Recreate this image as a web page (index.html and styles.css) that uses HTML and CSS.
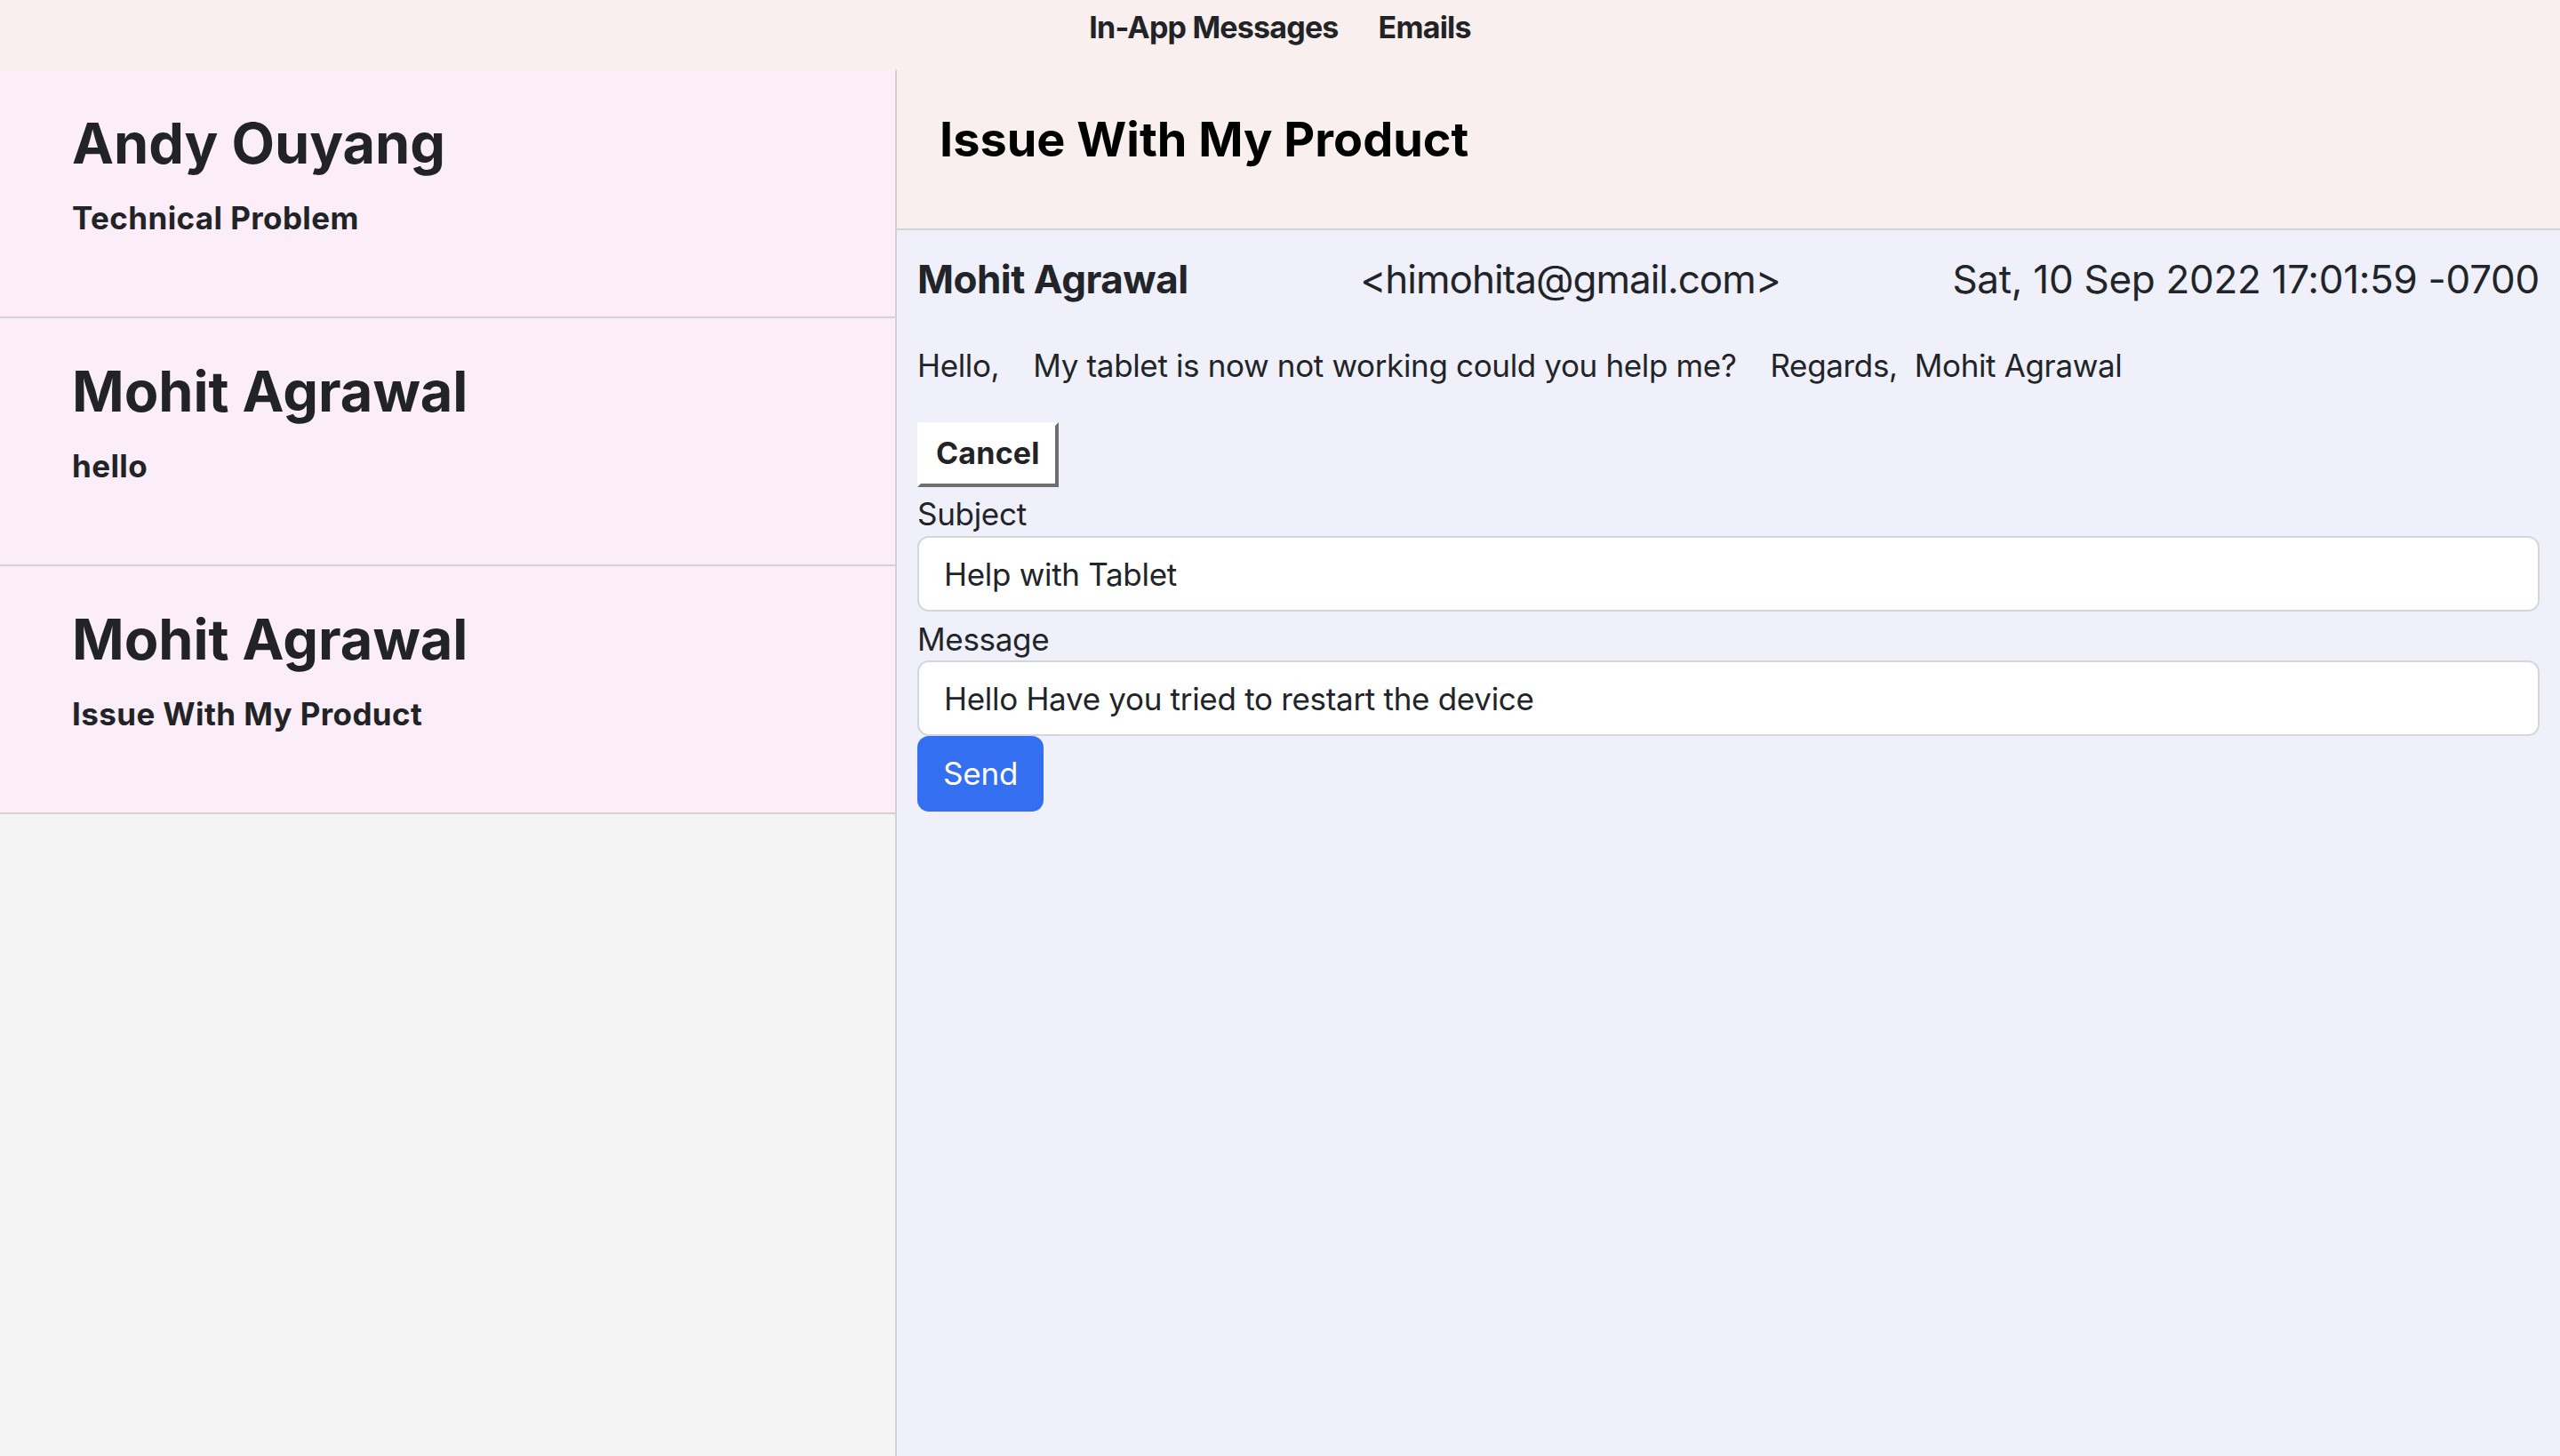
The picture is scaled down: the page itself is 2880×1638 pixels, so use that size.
FILE: index.html
```html
<!DOCTYPE html>
<html lang="en">
<head>
<meta charset="utf-8">
<title>Messages</title>
<link rel="stylesheet" href="styles.css">
</head>
<body>
<nav class="topnav">
  <a class="topnav-link" href="#">In-App Messages</a>
  <a class="topnav-link" href="#">Emails</a>
</nav>
<main class="layout">
  <aside class="inbox">
    <div class="thread">
      <h2 class="thread-name">Andy Ouyang</h2>
      <p class="thread-subject">Technical Problem</p>
    </div>
    <div class="thread">
      <h2 class="thread-name">Mohit Agrawal</h2>
      <p class="thread-subject">hello</p>
    </div>
    <div class="thread">
      <h2 class="thread-name">Mohit Agrawal</h2>
      <p class="thread-subject">Issue With My Product</p>
    </div>
  </aside>
  <section class="detail">
    <header class="detail-header">
      <h1 class="detail-title">Issue With My Product</h1>
    </header>
    <div class="detail-body">
      <div class="meta">
        <span class="meta-name">Mohit Agrawal</span>
        <span class="meta-email">&lt;himohita@gmail.com&gt;</span>
        <span class="meta-date">Sat, 10 Sep 2022 17:01:59 -0700</span>
      </div>
      <p class="message-text">Hello,    My tablet is now not working could you help me?    Regards,  Mohit Agrawal</p>
      <button class="cancel-btn" type="button">Cancel</button>
      <form class="reply-form">
        <label class="field-label field-label-first" for="subject">Subject</label>
        <input class="field-input" id="subject" type="text" value="Help with Tablet">
        <label class="field-label" for="message">Message</label>
        <input class="field-input" id="message" type="text" value="Hello Have you tried to restart the device">
        <button class="send-btn" type="button">Send</button>
      </form>
    </div>
  </section>
</main>
</body>
</html>
```
FILE: styles.css
```css
* {
  box-sizing: border-box;
}

html, body {
  margin: 0;
  padding: 0;
}

body {
  font-family: Inter, "Noto Sans", sans-serif;
  color: #212529;
  background: #f0f0fa;
  min-height: 100vh;
}

.topnav {
  height: 79px;
  background: #f9efee;
  display: flex;
  justify-content: center;
  align-items: flex-start;
  gap: 45px;
  padding-top: 10px;
}

.topnav-link {
  font-family: Inter, sans-serif;
  font-weight: 700;
  font-size: 34px;
  line-height: 41px;
  color: #222327;
  text-decoration: none;
  letter-spacing: -0.8px;
}

.layout {
  display: grid;
  grid-template-columns: 1009px 1fr;
  min-height: calc(100vh - 79px);
}

.inbox {
  background: #f4f4f4;
  border-right: 2px solid #d2d2d2;
}

.thread {
  height: 279px;
  background: #fbeef8;
  border-bottom: 2px solid #d4d2d4;
  padding: 44px 40px 0 81px;
}

.thread-name {
  margin: 0;
  font-weight: 700;
  font-size: 63px;
  line-height: 76px;
  color: #222327;
  letter-spacing: 0;
}

.thread-subject {
  margin: 26px 0 0;
  font-weight: 700;
  font-size: 35px;
  line-height: 41px;
  color: #222327;
  letter-spacing: 0.4px;
}

.detail {
  background: #f0f0fa;
}

.detail-header {
  height: 180px;
  background: #f9efee;
  border-bottom: 2px solid #d4d4d8;
  padding: 45px 48px 0;
}

.detail-title {
  margin: 0;
  font-weight: 700;
  font-size: 54px;
  line-height: 65px;
  color: #000;
  letter-spacing: 0;
}

.detail-body {
  padding: 29px 23px 40px;
}

.meta {
  display: flex;
  justify-content: space-between;
  align-items: baseline;
  font-size: 44px;
  line-height: 53px;
}

.meta-name {
  font-weight: 700;
  letter-spacing: -0.5px;
}

.meta-email {
  font-weight: 400;
  letter-spacing: -1px;
}

.meta-date {
  font-weight: 400;
  letter-spacing: -0.3px;
}

.message-text {
  margin: 49px 0 0;
  font-size: 35px;
  line-height: 42px;
  white-space: pre;
  letter-spacing: -0.35px;
}

.cancel-btn {
  display: block;
  margin-top: 43px;
  font-family: Inter, sans-serif;
  font-weight: 700;
  font-size: 34px;
  line-height: 41px;
  color: #222327;
  background: #fff;
  border-style: solid;
  border-width: 4px;
  border-color: #fff #6e6e6e #6e6e6e #fff;
  padding: 10px 17px 14px;
  letter-spacing: 0.2px;
}

.reply-form {
  display: flex;
  flex-direction: column;
  align-items: flex-start;
}

.field-label {
  display: block;
  margin: 7px 0 0;
  font-size: 35px;
  line-height: 48px;
  letter-spacing: -0.3px;
}

.field-label-first {
  margin: 6px 0 1px;
}

.field-input {
  display: block;
  width: 100%;
  height: 85px;
  padding: 20px 28px 19px;
  font-family: Inter, sans-serif;
  font-size: 35px;
  line-height: 42px;
  color: #212529;
  background: #fff;
  border: 2px solid #d3d6dc;
  border-radius: 13px;
  letter-spacing: -0.3px;
  outline: none;
}

.send-btn {
  display: block;
  height: 85px;
  padding: 21px 29px 22px;
  font-family: Inter, sans-serif;
  font-size: 35px;
  line-height: 42px;
  color: #fff;
  background: #346ff1;
  border: 0;
  border-radius: 13px;
  letter-spacing: -0.2px;
}
```
